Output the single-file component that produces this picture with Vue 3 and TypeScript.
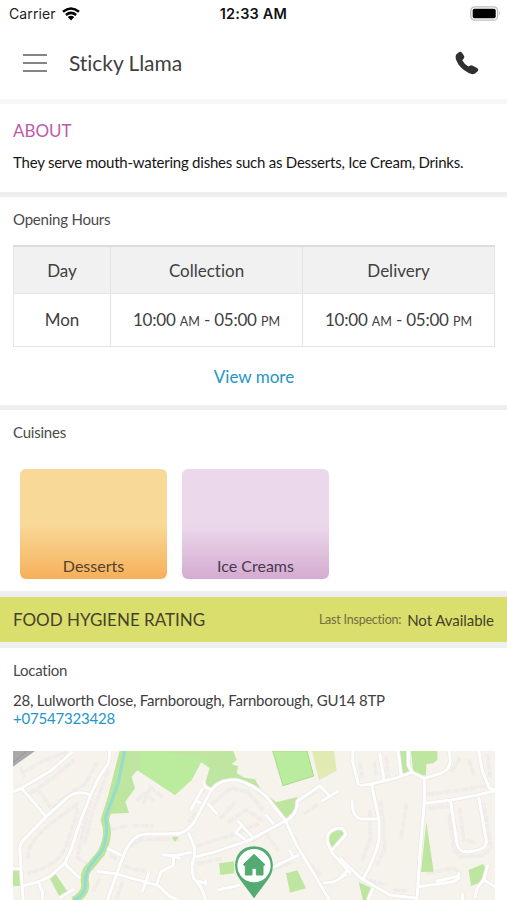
<script setup lang="ts">
interface Hours { day: string; open: string; close: string }
interface Cuisine { name: string; tone: string }

const hours: Hours[] = [{ day: 'Mon', open: '10:00', close: '05:00' }]
const cuisines: Cuisine[] = [
  { name: 'Desserts', tone: 'amber' },
  { name: 'Ice Creams', tone: 'mauve' },
]

const westRoads: string[] = [
  'M39 156 L64 145 L150 94 L217 36',
  'M64 145 L96 181 L138 230',
  'M330 33 L325 70 L295 115 L272 165 L240 246 L213 329 L194 371 L150 409 L115 426 L66 438',
  'M272 165 Q225 145 190 184 L138 230 L72 298 Q57 313 60 335 L69 480',
  'M39 386 L62 386', 'M115 426 L128 458 L126 480', 'M194 371 L240 415', 'M180 473 L222 448',
  'M322 325 L365 346', 'M290 394 L350 402 L430 424 L475 437 L510 470 L535 480',
  'M322 480 L350 402 L375 335 Q399 281 444 282 L540 282',
  'M446 397 L440 422 L426 455', 'M488 344 L522 348 L519 376 L484 394 L470 433', 'M522 348 L540 355',
]
const centreRoads: string[] = [
  'M0 281 L30 280 Q57 272 75 242 L118 161 Q140 117 200 120 Q250 132 290 171 L345 240 L380 315 L430 398 L478 480',
  'M100 123 L105 140 L124 150', 'M98 144 L62 211', 'M77 181 L93 190', 'M112 190 L142 223',
  'M55 277 L73 323 L73 351 L130 337 L240 300 L345 243 Q382 228 382 184 L450 137 L471 160 L478 170',
  'M455 184 L504 154', 'M288 225 L312 253', 'M203 243 L248 292', 'M194 276 L225 298', 'M214 258 L199 274',
  'M0 350 L65 337', 'M73 351 Q60 375 71 415 L91 438 L108 480', 'M82 422 L108 431 L107 419',
  'M143 450 L211 435', 'M300 386 L388 344', 'M358 330 L370 350',
  'M486 331 L527 284 Q526 263 505 264 Q462 274 474 311 L486 338 L540 398', 'M460 430 L493 425 L530 403',
]
const eastRoads: string[] = [
  'M39 33 L38 65 L55 133 Q58 138 90 133 L165 115 L216 97',
  'M119 39 L132 120', 'M174 33 L184 110', 'M205 33 L205 75 L217 98 L253 115 L305 99 Q330 88 331 62 L328 33',
  'M95 135 L117 240 L117 300 Q105 355 69 417', 'M36 181 Q36 233 64 237 L116 237',
  'M253 115 L253 185 L241 325 L231 480', 'M253 190 L330 181 L412 165 L466 153',
  'M416 33 L427 93 L448 145 L466 149', 'M332 184 L351 310 Q356 337 383 336 L418 329 Q441 321 439 301 L416 171',
  'M0 354 L64 416 L150 465 L231 475', 'M0 415 L20 394', 'M84 480 L99 444',
  'M235 440 L340 425 L357 414 L356 397', 'M288 424 L355 409', 'M367 460 L367 480',
  'M405 472 L412 443 L431 420 L443 375', 'M431 420 L466 440',
]
const buildings: string[] = [
  'M65 100 L126 64 L200 35', 'M62 82 L75 112', 'M90 161 L162 111 L224 60', 'M113 145 L152 203',
  'M158 207 Q203 158 255 134 L290 67', 'M85 357 Q75 306 180 230 L229 194 L231 218 L198 320 Q170 380 83 400',
  'M285 130 L257 240 L233 345', 'M325 90 L276 220 L253 315', 'M229 350 L268 377', 'M330 344 L352 358',
  'M390 320 L424 298 L540 298', 'M371 376 L400 388 L435 393', 'M330 270 L383 258', 'M398 257 L460 258',
  'M299 415 L280 455', 'M368 427 L348 480', 'M430 190 L451 141 L488 172', 'M410 183 L433 160 L464 184',
  'M639 103 L610 157', 'M590 217 L565 246', 'M635 193 L694 143 L745 157 L788 210', 'M660 236 L706 185',
  'M683 247 L739 210 L790 243', 'M590 318 L690 287 L777 251', 'M592 371 L665 356', 'M752 306 L796 279 L836 333',
  'M877 281 L909 347 L961 405', 'M912 221 L955 193', 'M877 193 L949 154', 'M780 405 L880 365',
  'M1080 68 L1087 115', 'M1123 65 L1129 104', 'M1158 50 L1165 112', 'M1220 190 L1202 298', 'M1141 182 L1151 248 L1154 331 L1130 376',
  'M1109 210 L1111 295 L1085 365', 'M1280 163 L1390 149 L1470 136', 'M1380 54 L1354 96', 'M1406 57 L1422 109',
  'M1462 41 L1470 110', 'M1285 205 L1346 199', 'M1347 224 L1360 325 L1380 350 L1450 346 L1474 321 L1450 190',
  'M1379 203 L1391 299 L1427 308', 'M1280 400 L1359 384 L1380 398', 'M1080 414 L1160 435', 'M1180 450 L1219 453',
]
</script>

<template>
  <main class="screen">
    <div class="status">
      <div class="carrier">
        <span>Carrier</span>
        <svg class="wifi" viewBox="0 0 18 14" fill="none" stroke="#000" stroke-width="2.5">
          <path d="M1 4.8 Q9 -1.8 17 4.8M3.9 8 Q9 3.8 14.1 8" />
          <path d="M9 13.4 L5.8 10.1 Q9 7.5 12.2 10.1Z" fill="#000" stroke="none" />
        </svg>
      </div>
      <span class="clock">12:33 AM</span>
      <svg class="battery" viewBox="0 0 31 16">
        <rect x=".8" y=".8" width="26.8" height="13.4" rx="4" fill="#fff" stroke="#bdbdbd" stroke-width="1.3" />
        <rect x="2.7" y="2.7" width="23" height="9.6" rx="1.7" />
        <path d="M29 5.3 Q30.8 7.5 29 9.7Z" fill="#aaa" />
      </svg>
    </div>

    <header class="appbar">
      <button class="menu" aria-label="Menu"><i></i><i></i><i></i></button>
      <h1>Sticky Llama</h1>
      <svg class="phone" viewBox="0 0 24 24" fill="#303030">
        <path d="M1.2 3.4 L4.1 1 Q5.7 .2 7 1.7 L9.1 5 Q9.8 6.7 8.3 8 L7.3 9.2 Q9.2 13.2 13.5 15.6 L14.9 14.7 Q16.4 13.8 17.8 14.7 L21.6 16.7 Q24.3 18.2 22.7 20.3 L20 22.5 Q17.6 24 13.7 22.1 Q4.2 17.3 1.1 8.8 Q.1 5.4 1.2 3.4Z" />
      </svg>
    </header>

    <section class="about">
      <h2>ABOUT</h2>
      <p>They serve mouth-watering dishes such as Desserts, Ice Cream, Drinks.</p>
    </section>

    <section class="opening">
      <h3>Opening Hours</h3>
      <table>
        <thead><tr><th class="day">Day</th><th>Collection</th><th>Delivery</th></tr></thead>
        <tbody>
          <tr v-for="h in hours" :key="h.day">
            <td>{{ h.day }}</td>
            <td v-for="n in 2" :key="n" class="time">{{ h.open }} <small>AM</small> - {{ h.close }} <small>PM</small></td>
          </tr>
        </tbody>
      </table>
      <a class="more">View more</a>
    </section>

    <section class="cuisines">
      <h3>Cuisines</h3>
      <div class="cards">
        <div v-for="c in cuisines" :key="c.name" class="card" :class="c.tone">{{ c.name }}</div>
      </div>
    </section>

    <section class="hygiene">
      <h2>FOOD HYGIENE RATING</h2>
      <span class="last">Last Inspection:</span>
      <span class="value">Not Available</span>
    </section>

    <section class="location">
      <h3>Location</h3>
      <address>28, Lulworth Close, Farnborough, Farnborough, GU14 8TP</address>
      <a class="tel">+07547323428</a>
      <svg class="map" viewBox="39 33 1446 447">
        <rect x="39" y="33" width="1446" height="447" fill="#f6f3ec" />
        <g fill="none" stroke="#efecea" stroke-width="11" stroke-dasharray="23 3">
          <path v-for="d in buildings" :key="d" :d="d" />
        </g>
        <path d="M39 33 H105 L39 80Z" fill="#a9a9aa" />
        <path d="M39 68 L80 33" stroke="#959699" stroke-width="3" />
        <g fill="#bee6a1">
          <path d="M362 33 H700 L710 60 L695 72 L714 79 L710 100 L733 113 L765 118 L780 145 L800 165 L829 187 L892 171 L888 205 L857 237 L840 225 L800 180 L760 145 L710 121 L670 122 L632 145 L614 134 L629 84 L603 66 L575 120 L525 165 L412 91 L395 110 L405 145 L376 185 L387 219 L330 221Z" />
          <path d="M39 391 L57 388 L62 437 L39 439Z M147 410 L166 401 L204 457 L181 475Z M516 290 H536 L525 306Z" />
          <path d="M657 370 L703 364 V400 L661 405Z M858 400 L892 391 L918 445 L870 458Z M981 290 Q992 270 1031 268 L1039 289 L999 331 L984 317Z" />
          <path d="M1198 33 H1224 L1227 80 L1234 94 L1205 109Z M1233 33 H1312 V60 L1300 70 L1279 73 L1278 105 L1263 108 L1239 91Z" />
          <path d="M1279 246 L1301 395 L1263 396Z M1076 427 L1117 445 L1104 480 H1089Z M1406 390 L1449 372 L1459 387 L1438 428 L1413 438Z" />
        </g>
        <path d="M418 33 L510 38 L625 60 L629 84 L603 66 L575 120 L525 165 L420 95Z" fill="#b9ec9c" opacity=".75" />
        <path d="M818 33 H921 L941 108 L849 137Z" fill="#b9ec9c" stroke="#a9da8d" stroke-width="3" />
        <path d="M936 33 H1002 L1010 92 L957 120Z" fill="#e1eab2" />
        <g fill="none" stroke-linejoin="round">
          <path d="M371 33 L336 170 L314 240 Q332 286 304 338 L270 380 Q250 397 255 430 Q260 461 220 482" stroke="#bce59b" stroke-width="24" />
          <path d="M374 33 L354 130 L317 230 Q326 286 307 330 L273 375 Q256 395 256 430 Q260 461 220 482" stroke="#93dcd2" stroke-width="9" />
        </g>
        <g fill="none" stroke="#e9e7e5" stroke-width="13" stroke-linejoin="round">
          <path v-for="d in westRoads" :key="d" :d="d" />
          <path v-for="d in centreRoads" :key="d" :d="d" transform="translate(510)" />
          <path v-for="d in eastRoads" :key="d" :d="d" transform="translate(1020)" />
        </g>
        <g fill="none" stroke="#fff" stroke-width="9" stroke-linejoin="round">
          <path v-for="d in westRoads" :key="d" :d="d" />
          <path v-for="d in centreRoads" :key="d" :d="d" transform="translate(510)" />
          <path v-for="d in eastRoads" :key="d" :d="d" transform="translate(1020)" />
        </g>
        <g transform="translate(510)">
          <path d="M252 475 L211 420 C181 384 194 319 252 319 C310 319 323 384 293 420Z" fill="#54ab72" />
          <circle cx="252" cy="377" r="50" fill="#fff" />
          <path d="M220 374 L252 343 L285 374 L279 378 V405 H259 V385 H246 V405 H226 V378Z" fill="#54ab72" stroke="#54ab72" stroke-width="3" stroke-linejoin="round" />
        </g>
      </svg>
    </section>
  </main>
</template>

<style>
body { margin: 0; background: #fff; overflow: hidden; }
</style>

<style scoped>
* { box-sizing: border-box; }
.screen { width: 507px; height: 900px; overflow: hidden; background: #fff; color: #404040; font-family: Lato, "Liberation Sans", sans-serif; font-variant-ligatures: none; }
h1, h2, h3, p { margin: 0; font-weight: 400; }
.status { height: 27px; display: grid; grid-template-columns: 1fr auto 1fr; align-items: center; padding: 0 6px 0 9px; font-family: Inter, sans-serif; font-size: 14px; color: #222; }
.carrier { display: flex; align-items: center; gap: 6px; letter-spacing: .1px; }
.wifi { width: 18px; height: 14px; }
.clock { font-weight: 600; color: #111; font-size: 14.5px; letter-spacing: .2px; margin-right: 3px; }
.battery { width: 31px; height: 16px; justify-self: end; }
.appbar { height: 77px; display: flex; align-items: center; padding: 0 28px 0 23px; border-bottom: 5px solid #f7f7f7; }
.menu { display: flex; flex-direction: column; gap: 6px; width: 24px; padding: 0; border: 0; background: none; }
.menu i { height: 2px; background: #858585; }
h1 { margin-left: 22px; font-size: 21px; line-height: 28px; flex: 1; letter-spacing: -.06px; }
.phone { width: 24px; height: 24px; }
.about { height: 93px; padding: 17px 13px 0; border-bottom: 5px solid #eee; }
.about h2 { font-size: 17px; line-height: 20px; color: #bd5bab; }
.about p { margin-top: 11px; font-size: 15px; line-height: 20px; color: #161616; white-space: nowrap; letter-spacing: -.23px; }
h3 { font-size: 15px; line-height: 20px; color: #4a4a4a; letter-spacing: -.22px; }
.opening { height: 213px; padding: 12px 12px 0 13px; border-bottom: 5px solid #eee; }
table { width: 482px; margin-top: 16px; border-collapse: collapse; table-layout: fixed; font-size: 17px; text-align: center; }
.day { width: 97px; }
th, td { padding: 0; border: 1px solid #e4e4e4; font-weight: 400; }
th { height: 47px; padding-top: 1px; background: #f1f1f1; border-top: 2px solid #ddd; }
td { height: 53px; white-space: nowrap; }
.time { letter-spacing: -.22px; }
small { font-size: 12.5px; letter-spacing: 0; }
.more { display: block; margin-top: 18px; font-size: 17px; line-height: 24px; text-align: center; color: #2496c6; }
.cuisines { height: 187px; padding: 12px 13px 0; border-bottom: 6px solid #eeeef0; }
.cards { display: flex; gap: 15px; padding: 27px 7px 0; }
.card { width: 147px; height: 110px; display: flex; align-items: flex-end; justify-content: center; padding-bottom: 3px; border-radius: 6px; font-size: 16px; line-height: 21px; }
.amber { background: linear-gradient(#f9d998 50%, #f6b05a); color: #514330; }
.mauve { background: linear-gradient(#ebd9eb 50%, #d5abd2); color: #49394c; }
.hygiene { height: 51px; display: flex; align-items: center; padding: 0 13px; background: #d9de6c; border-bottom: 6px solid #eff0f2; color: #46412b; }
.hygiene h2 { flex: 1; font-size: 17px; }
.last { font-size: 12.5px; letter-spacing: -.22px; color: #716f43; }
.value { margin-left: 6px; font-size: 15px; letter-spacing: -.04px; }
.location { padding: 12px 12px 0 13px; }
address { margin-top: 11px; font-size: 15px; line-height: 18px; font-style: normal; letter-spacing: -.2px; }
.tel { display: block; font-size: 15px; line-height: 18px; color: #2496c6; letter-spacing: -.2px; }
.map { display: block; width: 482px; height: 149px; margin-top: 24px; }
</style>
